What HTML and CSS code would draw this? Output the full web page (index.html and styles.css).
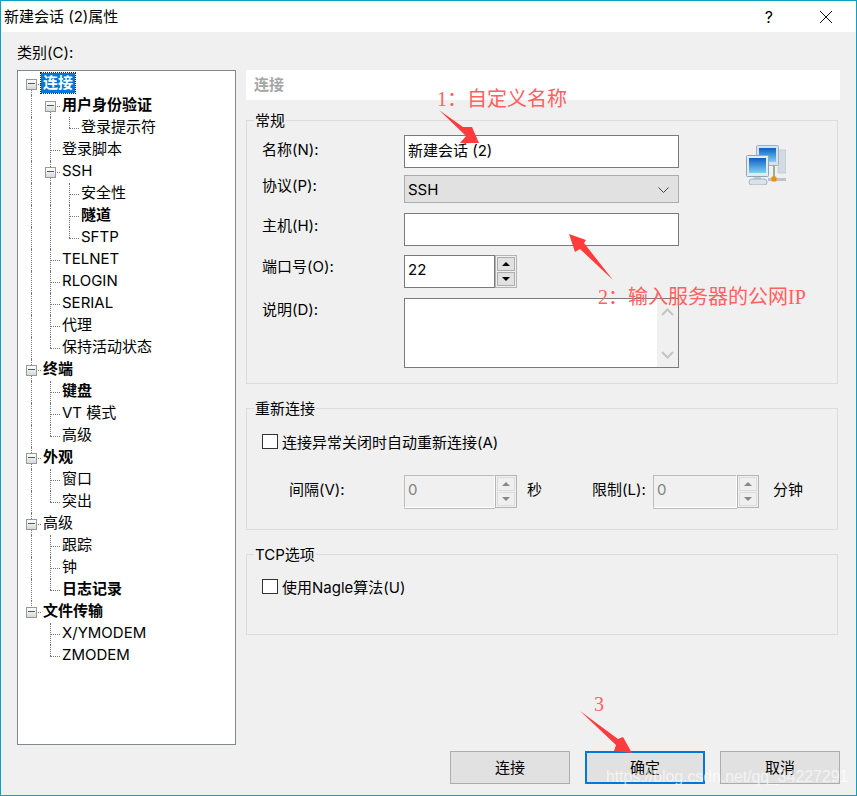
FILE: index.html
```html
<!DOCTYPE html>
<html>
<head>
    <title>新建会话 (2)属性</title>
    <link rel="stylesheet" href="styles.css">
</head>
<body>
    <div class="window">
        <div class="titlebar">
            <span class="title">新建会话 (2)属性</span>
            <span class="help">?</span>
            <svg class="close" width="12" height="12" viewBox="0 0 12 12"><path d="M0 0L12 12M12 0L0 12" stroke="#111" fill="none"/></svg>
        </div>

        <div class="main">
            <div class="left">
                <div class="category-label">类别(C):</div>
                <div class="tree">
                    <div class="row"><span class="g d t"><i class="toggle"></i></span><span class="node selected">连接</span></div>
                    <div class="row"><span class="g v"></span><span class="g d t"><i class="toggle"></i></span><span class="node bold">用户身份验证</span></div>
                    <div class="row"><span class="g v"></span><span class="g v"></span><span class="g l t"></span><span class="node">登录提示符</span></div>
                    <div class="row"><span class="g v"></span><span class="g v t"></span><span class="node">登录脚本</span></div>
                    <div class="row"><span class="g v"></span><span class="g v t"><i class="toggle"></i></span><span class="node">SSH</span></div>
                    <div class="row"><span class="g v"></span><span class="g v"></span><span class="g v t"></span><span class="node">安全性</span></div>
                    <div class="row"><span class="g v"></span><span class="g v"></span><span class="g v t"></span><span class="node bold">隧道</span></div>
                    <div class="row"><span class="g v"></span><span class="g v"></span><span class="g l t"></span><span class="node">SFTP</span></div>
                    <div class="row"><span class="g v"></span><span class="g v t"></span><span class="node">TELNET</span></div>
                    <div class="row"><span class="g v"></span><span class="g v t"></span><span class="node">RLOGIN</span></div>
                    <div class="row"><span class="g v"></span><span class="g v t"></span><span class="node">SERIAL</span></div>
                    <div class="row"><span class="g v"></span><span class="g v t"></span><span class="node">代理</span></div>
                    <div class="row"><span class="g v"></span><span class="g l t"></span><span class="node">保持活动状态</span></div>
                    <div class="row"><span class="g v t"><i class="toggle"></i></span><span class="node bold">终端</span></div>
                    <div class="row"><span class="g v"></span><span class="g v t"></span><span class="node bold">键盘</span></div>
                    <div class="row"><span class="g v"></span><span class="g v t"></span><span class="node">VT 模式</span></div>
                    <div class="row"><span class="g v"></span><span class="g l t"></span><span class="node">高级</span></div>
                    <div class="row"><span class="g v t"><i class="toggle"></i></span><span class="node bold">外观</span></div>
                    <div class="row"><span class="g v"></span><span class="g v t"></span><span class="node">窗口</span></div>
                    <div class="row"><span class="g v"></span><span class="g l t"></span><span class="node">突出</span></div>
                    <div class="row"><span class="g v t"><i class="toggle"></i></span><span class="node">高级</span></div>
                    <div class="row"><span class="g v"></span><span class="g v t"></span><span class="node">跟踪</span></div>
                    <div class="row"><span class="g v"></span><span class="g v t"></span><span class="node">钟</span></div>
                    <div class="row"><span class="g v"></span><span class="g l t"></span><span class="node bold">日志记录</span></div>
                    <div class="row"><span class="g l t"><i class="toggle"></i></span><span class="node bold">文件传输</span></div>
                    <div class="row"><span class="g"></span><span class="g v t"></span><span class="node">X/YMODEM</span></div>
                    <div class="row"><span class="g"></span><span class="g l t"></span><span class="node">ZMODEM</span></div>
                </div>
            </div>

            <div class="right">
                <div class="page-title">连接</div>

                <fieldset class="group group-general">
                    <legend>常规</legend>
                    <div class="general-body">
                        <div class="form">
                            <div class="form-row row-name">
                                <label class="field-label">名称(N):</label>
                                <input class="text-input tall" type="text" value="新建会话 (2)">
                            </div>
                            <div class="form-row row-protocol">
                                <label class="field-label">协议(P):</label>
                                <div class="select">
                                    <span>SSH</span>
                                    <svg width="11" height="6" viewBox="0 0 11 6"><path d="M0.5 0.5L5.5 5.5L10.5 0.5" stroke="#444" fill="none"/></svg>
                                </div>
                            </div>
                            <div class="form-row row-host">
                                <label class="field-label">主机(H):</label>
                                <input class="text-input tall" type="text">
                            </div>
                            <div class="form-row row-port">
                                <label class="field-label">端口号(O):</label>
                                <div class="spin port-spin">
                                    <input class="text-input" type="text" value="22">
                                    <div class="spin-btns">
                                        <div class="spin-btn"><i class="arrow-up"></i></div>
                                        <div class="spin-btn"><i class="arrow-down"></i></div>
                                    </div>
                                </div>
                            </div>
                            <div class="form-row">
                                <label class="field-label">说明(D):</label>
                                <div class="memo">
                                    <div class="memo-text"></div>
                                    <div class="memo-scroll">
                                        <svg width="13" height="8" viewBox="0 0 13 8"><path d="M1 7L6.5 1.5L12 7" stroke="#c4c4c4" stroke-width="2" fill="none"/></svg>
                                        <svg width="13" height="8" viewBox="0 0 13 8"><path d="M1 1L6.5 6.5L12 1" stroke="#c4c4c4" stroke-width="2" fill="none"/></svg>
                                    </div>
                                </div>
                            </div>
                        </div>
                        <svg class="net-icon" width="40" height="40" viewBox="0 0 40 40">
                            <defs>
                                <linearGradient id="screen" x1="0" y1="0" x2="0" y2="1">
                                    <stop offset="0" stop-color="#0d5fc4"/>
                                    <stop offset="1" stop-color="#7fd0f2"/>
                                </linearGradient>
                            </defs>
                            <rect x="32" y="5" width="8" height="23" fill="#d3dae2" stroke="#b4bec8" stroke-width="0.6"/>
                            <rect x="10.5" y="0.5" width="22" height="20" rx="1" fill="#d6e2ee" stroke="#9db2c6"/>
                            <rect x="13" y="3" width="17" height="14" fill="url(#screen)"/>
                            <rect x="27" y="20" width="2" height="13" fill="#9bb08c"/>
                            <rect x="22" y="33" width="18" height="3" fill="#b9c4ce"/>
                            <rect x="0.5" y="10.5" width="22" height="21" rx="1" fill="#e2ebf3" stroke="#8ea6bc"/>
                            <rect x="3" y="13" width="17" height="15" fill="url(#screen)"/>
                            <rect x="8" y="32" width="7" height="3" fill="#c3ced8"/>
                            <rect x="3" y="34" width="18" height="6" rx="3" fill="#dbe2e8" stroke="#98a6b2" stroke-width="0.8"/>
                            <rect x="25.5" y="31.5" width="5" height="5" rx="1" fill="#f09000"/>
                        </svg>
                    </div>
                </fieldset>

                <fieldset class="group group-reconnect">
                    <legend>重新连接</legend>
                    <div class="check-row reconnect-check">
                        <span class="checkbox"></span>
                        <span class="check-text">连接异常关闭时自动重新连接(A)</span>
                    </div>
                    <div class="interval-row">
                        <label class="interval-label">间隔(V):</label>
                        <div class="spin disabled interval-spin">
                            <input class="text-input" type="text" value="0" disabled>
                            <div class="spin-btns">
                                <div class="spin-btn"><i class="arrow-up"></i></div>
                                <div class="spin-btn"><i class="arrow-down"></i></div>
                            </div>
                        </div>
                        <span class="unit-sec">秒</span>
                        <label class="limit-label">限制(L):</label>
                        <div class="spin disabled limit-spin">
                            <input class="text-input" type="text" value="0" disabled>
                            <div class="spin-btns">
                                <div class="spin-btn"><i class="arrow-up"></i></div>
                                <div class="spin-btn"><i class="arrow-down"></i></div>
                            </div>
                        </div>
                        <span class="unit-min">分钟</span>
                    </div>
                </fieldset>

                <fieldset class="group group-tcp">
                    <legend>TCP选项</legend>
                    <div class="check-row tcp-check">
                        <span class="checkbox"></span>
                        <span class="check-text">使用Nagle算法(U)</span>
                    </div>
                </fieldset>

                <div class="button-row">
                    <button>连接</button>
                    <button class="default">确定</button>
                    <button>取消</button>
                </div>
            </div>
        </div>
    </div>

    <!-- red notes drawn on top of the screenshot -->
    <svg class="arrows" width="857" height="796" viewBox="0 0 857 796">
        <polygon points="439,110 463,127 472,127 479,143 460,143 466,136"/>
        <polygon points="569,234 586,240 584,243 613,280 580,249 575,252"/>
        <polygon points="580,711 618,739 623,737 632,753 614,751 616,745"/>
    </svg>
    <div class="note note-1">1：自定义名称</div>
    <div class="note note-2">2：输入服务器的公网IP</div>
    <div class="note note-3">3</div>
    <div class="watermark">https://blog.csdn.net/qq_34227291</div>
</body>
</html>
```

FILE: styles.css
```css
* {
    box-sizing: border-box;
}

body {
    margin: 0;
    position: relative;
    width: 857px;
    height: 796px;
    overflow: hidden;
    background: #f0f0f0;
    color: #000;
    font-family: Inter, "Noto Sans CJK SC", sans-serif;
    font-size: 15px;
    line-height: 20px;
}

.window {
    width: 857px;
    height: 796px;
    border: 1px solid #0f9fc0;
    display: flex;
    flex-direction: column;
}

.titlebar {
    height: 31px;
    flex: none;
    background: #fff;
    display: flex;
    align-items: center;
    padding: 0 24px 0 3px;
}

.title {
    flex: 1;
    margin-top: 1px;
}

.help {
    margin-right: 47px;
    font-size: 16px;
}

.main {
    flex: 1;
    display: flex;
    padding-bottom: 11px;
}

.left {
    width: 234px;
    margin-left: 16px;
    flex: none;
}

.category-label {
    margin-top: 11px;
    margin-bottom: 7px;
}

.tree {
    width: 219px;
    height: 675px;
    background: #fff;
    border: 1px solid #828790;
    padding: 2px 0 0 4px;
}

.row {
    display: flex;
    height: 22px;
    white-space: nowrap;
}

.g {
    position: relative;
    flex: none;
    width: 19px;
    height: 22px;
}

.g.v::before,
.g.d::before,
.g.l::before {
    content: "";
    position: absolute;
    left: 9px;
    top: 0;
    height: 22px;
    border-left: 1px dotted #777;
}

.g.d::before {
    top: 11px;
    height: 11px;
}

.g.l::before {
    height: 11px;
}

.g.t::after {
    content: "";
    position: absolute;
    left: 9px;
    top: 11px;
    width: 10px;
    border-top: 1px dotted #777;
}

.toggle {
    position: absolute;
    z-index: 1;
    left: 4px;
    top: 6px;
    width: 11px;
    height: 11px;
    border: 1px solid #999;
    background: linear-gradient(#fff, #d8d8d8);
}

.toggle::after {
    content: "";
    position: absolute;
    left: 1px;
    top: 3px;
    width: 7px;
    height: 1px;
    background: #3a56a5;
}

.node {
    padding: 0 2px;
    height: 20px;
}

.bold {
    font-weight: bold;
}

.selected {
    background: #0078d7;
    color: #fff;
    font-weight: bold;
    outline: 1px dotted #222;
}

.right {
    width: 594px;
    margin-left: -5px;
    padding-top: 38px;
    display: flex;
    flex-direction: column;
}

.page-title {
    height: 30px;
    flex: none;
    background: #fff;
    color: #a6a6a6;
    font-weight: bold;
    padding: 5px 8px;
}

.group {
    width: 592px;
    flex: none;
    margin: 14px 0 0;
    padding: 0;
    border: 1px solid #dcdcdc;
    min-width: 0;
}

.group legend {
    margin-left: 7px;
    padding: 1px 1px 0;
    height: 20px;
}

.group-general {
    height: 274px;
    margin-top: 10px;
}

.group-reconnect {
    height: 132px;
}

.group-tcp {
    height: 91px;
}

.general-body {
    display: flex;
    padding: 5px 0 0 15px;
}

.form {
    width: 417px;
    flex: none;
}

.net-icon {
    margin: 10px 0 0 67px;
}

.form-row {
    display: flex;
    align-items: flex-start;
}

.row-name {
    margin-bottom: 7px;
}

.row-protocol {
    margin-bottom: 10px;
}

.row-host {
    margin-bottom: 9px;
}

.row-port {
    margin-bottom: 10px;
}

.field-label {
    width: 142px;
    flex: none;
    padding-top: 2px;
}

.row-name .field-label {
    padding-top: 5px;
}

.row-protocol .field-label {
    padding-top: 1px;
}

.row-host .field-label {
    padding-top: 3px;
}

.text-input {
    display: block;
    width: 100%;
    height: 33px;
    border: 1px solid #7a7a7a;
    border-radius: 0;
    outline: none;
    background: #fff;
    padding: 0 3px 5px;
    margin: 0;
    font: inherit;
    color: #000;
}

.text-input.tall {
    width: 275px;
}

.select {
    width: 275px;
    height: 28px;
    border: 1px solid #adadad;
    background: #e1e1e1;
    display: flex;
    align-items: center;
    justify-content: space-between;
    padding: 1px 9px 0 3px;
}

.spin {
    display: flex;
}

.spin .text-input {
    flex: 1;
    min-width: 0;
    width: auto;
}

.spin-btns {
    width: 22px;
    flex: none;
    border: 1px solid #b4b4b4;
    padding: 1px;
    display: flex;
    flex-direction: column;
    gap: 1px;
}

.spin-btn {
    flex: 1;
    background: #e1e1e1;
    border: 1px solid #adadad;
    display: flex;
    align-items: center;
    justify-content: center;
}

.arrow-up,
.arrow-down {
    width: 0;
    height: 0;
    border-left: 4px solid transparent;
    border-right: 4px solid transparent;
}

.arrow-up {
    border-bottom: 4px solid #000;
}

.arrow-down {
    border-top: 4px solid #000;
}

.port-spin {
    width: 113px;
}

.spin.disabled .text-input {
    background: #f0f0f0;
    color: #838383;
    border-color: #bcbcbc;
    border-bottom-color: #fff;
    border-right-color: #fff;
    box-shadow: 0 1px 0 #bcbcbc;
}

.spin.disabled .spin-btn {
    background: #efefef;
    border-color: #dcdcdc;
}

.spin.disabled .arrow-up {
    border-bottom-color: #888;
}

.spin.disabled .arrow-down {
    border-top-color: #888;
}

.memo {
    width: 275px;
    height: 70px;
    border: 1px solid #7a7a7a;
    display: flex;
}

.memo-text {
    flex: 1;
    background: #fff;
}

.memo-scroll {
    width: 21px;
    background: #f0f0f0;
    display: flex;
    flex-direction: column;
    justify-content: space-between;
    align-items: center;
    padding: 9px 0 8px;
}

.check-row {
    display: flex;
    align-items: center;
    height: 15px;
    margin-left: 15px;
}

.checkbox {
    width: 16px;
    height: 15px;
    flex: none;
    background: #fff;
    border: 1px solid #333;
    margin-right: 4px;
}

.check-text {
    margin-top: 2px;
}

.reconnect-check {
    margin-top: 16px;
}

.tcp-check {
    margin-top: 15px;
}

.interval-row {
    display: flex;
    align-items: flex-start;
    margin: 26px 0 0 42px;
}

.interval-row label,
.interval-row span {
    padding-top: 5px;
}

.interval-label {
    width: 115px;
}

.interval-spin {
    width: 113px;
    height: 33px;
}

.unit-sec {
    width: 75px;
    padding-left: 10px;
}

.limit-label {
    width: 61px;
}

.limit-spin {
    width: 106px;
    height: 33px;
}

.unit-min {
    margin-left: 14px;
}

.button-row {
    margin-top: auto;
    display: flex;
    justify-content: flex-end;
    gap: 15px;
}

button {
    width: 120px;
    height: 33px;
    border: 1px solid #adadad;
    background: #e1e1e1;
    border-radius: 0;
    padding: 0;
    font: inherit;
    color: #000;
}

button.default {
    border: 2px solid #0078d7;
}

.arrows {
    position: absolute;
    left: 0;
    top: 0;
    fill: #ff3b3b;
}

.note {
    position: absolute;
    color: #ff6060;
    font-family: "Liberation Serif", "Noto Sans CJK SC", serif;
    font-size: 20px;
    line-height: 24px;
    white-space: nowrap;
}

.note-1 {
    left: 437px;
    top: 87px;
}

.note-2 {
    left: 598px;
    top: 285px;
}

.note-3 {
    left: 594px;
    top: 692px;
}

.watermark {
    position: absolute;
    left: 606px;
    top: 766px;
    color: rgba(255, 255, 255, 0.65);
    font-family: "Liberation Sans", sans-serif;
    font-size: 16px;
    letter-spacing: -0.1px;
    line-height: 22px;
    white-space: nowrap;
}
```
